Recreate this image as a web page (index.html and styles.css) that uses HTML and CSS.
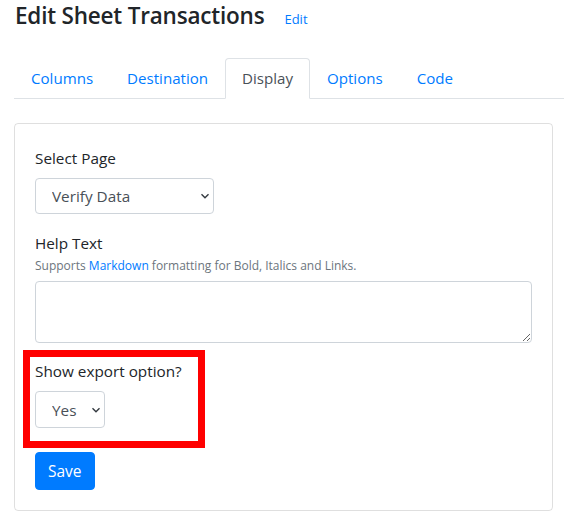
FILE: index.html
```html
<!DOCTYPE html>
<html>
<head>
<meta charset="utf-8">
<link rel="stylesheet" href="styles.css">
</head>
<body>
<div class="page">
  <div class="title-row">
    <h3 class="title">Edit Sheet Transactions</h3>
    <a class="title-edit" href="#">Edit</a>
  </div>
  <ul class="tabs">
    <li class="tab"><a href="#">Columns</a></li>
    <li class="tab"><a href="#">Destination</a></li>
    <li class="tab active"><a href="#">Display</a></li>
    <li class="tab"><a href="#">Options</a></li>
    <li class="tab"><a href="#">Code</a></li>
  </ul>
  <div class="card">
    <div class="group group-first">
      <label class="label">Select Page</label>
      <div class="select select-page">
        <select><option>Verify Data</option></select>
        <svg class="chev" width="10" height="10" viewBox="0 0 10 10"><path d="M1.5 3.2 5 6.7 8.5 3.2" fill="none" stroke="#343a40" stroke-width="1.4"/></svg>
      </div>
    </div>
    <div class="group">
      <label class="label label-tight">Help Text</label>
      <small class="help">Supports <a href="#">Markdown</a> formatting for Bold, Italics and Links.</small>
      <textarea class="textarea" rows="2"></textarea>
    </div>
    <div class="group group-export">
      <div class="highlight"></div>
      <label class="label">Show export option?</label>
      <div class="select select-yes">
        <select><option>Yes</option></select>
        <svg class="chev" width="10" height="10" viewBox="0 0 10 10"><path d="M1.5 3.2 5 6.7 8.5 3.2" fill="none" stroke="#343a40" stroke-width="1.4"/></svg>
      </div>
    </div>
    <button class="btn">Save</button>
  </div>
</div>
</body>
</html>
```
FILE: styles.css
```css
* { box-sizing: border-box; }
body {
  margin: 0;
  background: #fff;
  font-family: "Open Sans", "Noto Sans", sans-serif;
  font-size: 15.3px;
  line-height: 24px;
  color: #212529;
}
a { color: #007bff; text-decoration: none; }
.page { padding: 1px 11px 0 14px; }
.title-row {
  display: flex;
  align-items: baseline;
  margin-left: 1px;
  margin-bottom: 27px;
}
.title {
  margin: 0;
  font-size: 22.5px;
  font-weight: 600;
  line-height: 29px;
  letter-spacing: -0.2px;
}
.title-edit {
  margin-left: 20px;
  font-size: 13px;
}
.tabs {
  list-style: none;
  margin: 0 -11px 24px 0;
  padding: 0;
  display: flex;
  border-bottom: 1px solid #dee2e6;
}
.tab { margin-bottom: -1px; }
.tab a {
  display: block;
  padding: 8px 16px;
  border: 1px solid transparent;
  border-top-left-radius: 4px;
  border-top-right-radius: 4px;
  line-height: 23px;
  font-size: 15.1px;
}
.tab.active a {
  color: #495057;
  background: #fff;
  border-color: #dee2e6 #dee2e6 #fff;
}
.card {
  border: 1px solid rgba(0,0,0,.125);
  border-radius: 4px;
  padding: 22px 20px 20px;
}
.group { margin-bottom: 16px; position: relative; }
.group-first { margin-bottom: 17px; }
.label {
  display: block;
  margin-bottom: 8px;
}
.label-tight { margin-bottom: 0; }
.help {
  display: block;
  font-size: 12px;
  color: #6c757d;
  line-height: 18px;
  margin-top: 2px;
  margin-bottom: 6px;
}
.select { position: relative; }
.select select {
  -webkit-appearance: none;
  appearance: none;
  font: inherit;
  color: #495057;
  height: 36px;
  padding: 0 10px 0 16px;
  border: 1px solid #ced4da;
  border-radius: 4px;
  background: #fff;
}
.select-page select { width: 179px; }
.select-yes select { width: 70px; height: 37px; }
.chev { position: absolute; top: 13px; }
.select-page .chev { left: 165px; }
.select-yes .chev { left: 56px; top: 14px; }
.textarea {
  display: block;
  width: 100%;
  height: 62px;
  border: 1px solid #ced4da;
  border-radius: 4px;
  font: inherit;
  resize: vertical;
}
.group-export { margin-bottom: 24px; }
.highlight {
  position: absolute;
  left: -12px;
  top: -9px;
  width: 182px;
  height: 98px;
  border: 7px solid #f00;
}
.btn {
  font: inherit;
  font-size: 15.5px;
  color: #fff;
  background: #007bff;
  border: 1px solid #007bff;
  border-radius: 4px;
  height: 38px;
  padding: 0 12px;
}
```
